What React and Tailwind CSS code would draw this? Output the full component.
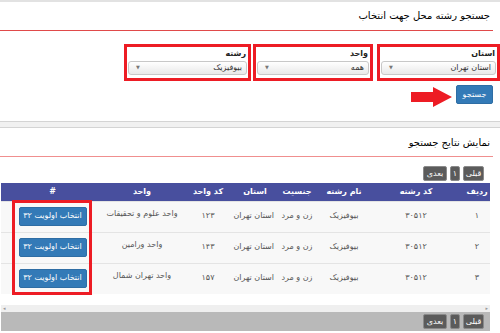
import React from 'react';

const rows = [
    { n: '۱', code: '۳۰۵۱۲', name: 'بیوفیزیک', gender: 'زن و مرد', prov: 'استان تهران', ucode: '۱۲۳', unit: 'واحد علوم و تحقیقات' },
    { n: '۲', code: '۳۰۵۱۲', name: 'بیوفیزیک', gender: 'زن و مرد', prov: 'استان تهران', ucode: '۱۴۳', unit: 'واحد ورامین' },
    { n: '۳', code: '۳۰۵۱۲', name: 'بیوفیزیک', gender: 'زن و مرد', prov: 'استان تهران', ucode: '۱۵۷', unit: 'واحد تهران شمال' },
];

const cols = [
    { label: 'ردیف', w: 'w-[26px]' },
    { label: 'کد رشته', w: 'w-[96px]' },
    { label: 'نام رشته', w: 'w-[48px]' },
    { label: 'جنسیت', w: 'w-[46px]' },
    { label: 'استان', w: 'w-[38px]' },
    { label: 'کد واحد', w: 'w-[56px]' },
    { label: 'واحد', w: 'w-[76px]' },
    { label: '#', w: 'w-[103px]' },
];

const PagerBtn = ({ children, className }) => (
    <div
        className={`h-[15px] flex items-center justify-center rounded-[2px] border border-[#8a8a8a] bg-[#5b5b5b] text-[8px] leading-none text-white ${className}`}
    >
        {children}
    </div>
);

const Pager = () => (
    <div className="flex gap-[3px]">
        <PagerBtn className="w-[21px]">قبلی</PagerBtn>
        <PagerBtn className="w-[10px]">۱</PagerBtn>
        <PagerBtn className="w-[24px]">بعدی</PagerBtn>
    </div>
);

const FilterBox = ({ label, value, className }) => (
    <div className={`border-[3px] border-[#ed1c24] pt-[2px] pb-[3px] px-[1px] ${className}`}>
        <div className="pr-[1px] text-[8px] leading-[10px] font-bold text-[#222]">{label}</div>
        <div className="mt-[2px] h-[14px] flex items-center justify-between rounded-[3px] border border-[#c8c8c8] bg-linear-to-b from-white to-[#e9e9e9] pr-[4px] pl-[7px] text-[8px] text-[#333]">
            <span>{value}</span>
            <span className="text-[5px] text-[#777]">▼</span>
        </div>
    </div>
);

export default function App() {
    return (
        <div
            dir="rtl"
            className="relative w-[500px] h-[333px] overflow-hidden bg-white text-[#333] font-['DejaVu_Sans',sans-serif]"
        >
            <div className="h-[2px] bg-[#e2e2e2]" />
            <div className="mr-[7px] border-b border-[#e04a4a] pr-[3px] pt-[7px] pb-[7px] text-[10px] leading-[14px] text-black">
                جستجو رشته محل جهت انتخاب
            </div>

            <div className="mt-[13px] flex">
                <FilterBox label="استان" value="استان تهران" className="w-[123px]" />
                <FilterBox label="واحد" value="همه" className="w-[120px] mr-[4px]" />
                <FilterBox label="رشته" value="بیوفیزیک" className="w-[127px] mr-[2px]" />
            </div>

            <div className="mt-[4px] mr-[7px] flex items-start gap-[4px]">
                <button className="h-[19px] w-[37px] rounded-[2px] border border-[#2e6da4] bg-[#337ab7] text-[8px] text-white">
                    جستجو
                </button>
                <svg width="41" height="20" viewBox="0 0 41 20" className="mt-[2px]">
                    <path d="M41 10 L22 0 V5 H0 V15 H22 V20 Z" fill="#ed1c24" />
                </svg>
            </div>

            <div className="mt-[14px] h-[7px] border-y border-[#d4d4d4] bg-[#f1f1f1]" />

            <div className="mr-[7px] border-b border-[#f08f8f] pr-[3px] pt-[8px] pb-[6px] text-[10px] leading-[14px] text-black">
                نمایش نتایج جستجو
            </div>

            <div className="mt-[9px] mr-[16px] flex">
                <Pager />
            </div>

            <div className="relative mt-[2px] mr-[10px] w-[489px]">
                <table className="w-full table-fixed border-collapse text-[8px]">
                    <colgroup>
                        {cols.map((c) => (
                            <col key={c.label} className={c.w} />
                        ))}
                    </colgroup>
                    <thead>
                        <tr className="h-[18px] bg-[#484f9e] text-white">
                            {cols.map((c) => (
                                <th key={c.label} className="p-0 text-center font-bold">
                                    {c.label}
                                </th>
                            ))}
                        </tr>
                    </thead>
                    <tbody>
                        {rows.map((r, i) => (
                            <tr key={i} className="h-[31px] border-t border-[#e4e4e4] bg-[#f8f8f8] align-top text-[#555]">
                                <td className="pt-[8px] text-center">{r.n}</td>
                                <td className="pt-[8px] text-center">{r.code}</td>
                                <td className="pt-[8px] text-center">{r.name}</td>
                                <td className="pt-[8px] text-center whitespace-nowrap">{r.gender}</td>
                                <td className="pt-[8px] text-center whitespace-nowrap">{r.prov}</td>
                                <td className="pt-[8px] text-center">{r.ucode}</td>
                                <td className="pt-[6px] text-center whitespace-nowrap">{r.unit}</td>
                                <td className="pt-[5px]">
                                    <div className="flex justify-center">
                                        <button className="h-[19px] w-[68px] rounded-[2px] border border-[#2e6da4] bg-[#337ab7] text-[8px] whitespace-nowrap text-white">
                                            انتخاب اولویت ۳۲
                                        </button>
                                    </div>
                                </td>
                            </tr>
                        ))}
                    </tbody>
                </table>
                <div className="absolute left-[11px] top-[17px] w-[80px] h-[95px] border-[3px] border-[#ed1c24] pointer-events-none" />
            </div>

            <div className="mt-[11px] mr-[10px] w-[489px] h-[7px] flex items-center justify-between bg-[#efefef] px-[2px] text-[5px] text-[#999]">
                <span>▸</span>
                <span>◂</span>
            </div>
            <div className="mr-[10px] w-[489px] h-[19px] flex items-center bg-[#b9b9b9] pr-[6px]">
                <Pager />
            </div>
        </div>
    );
}
